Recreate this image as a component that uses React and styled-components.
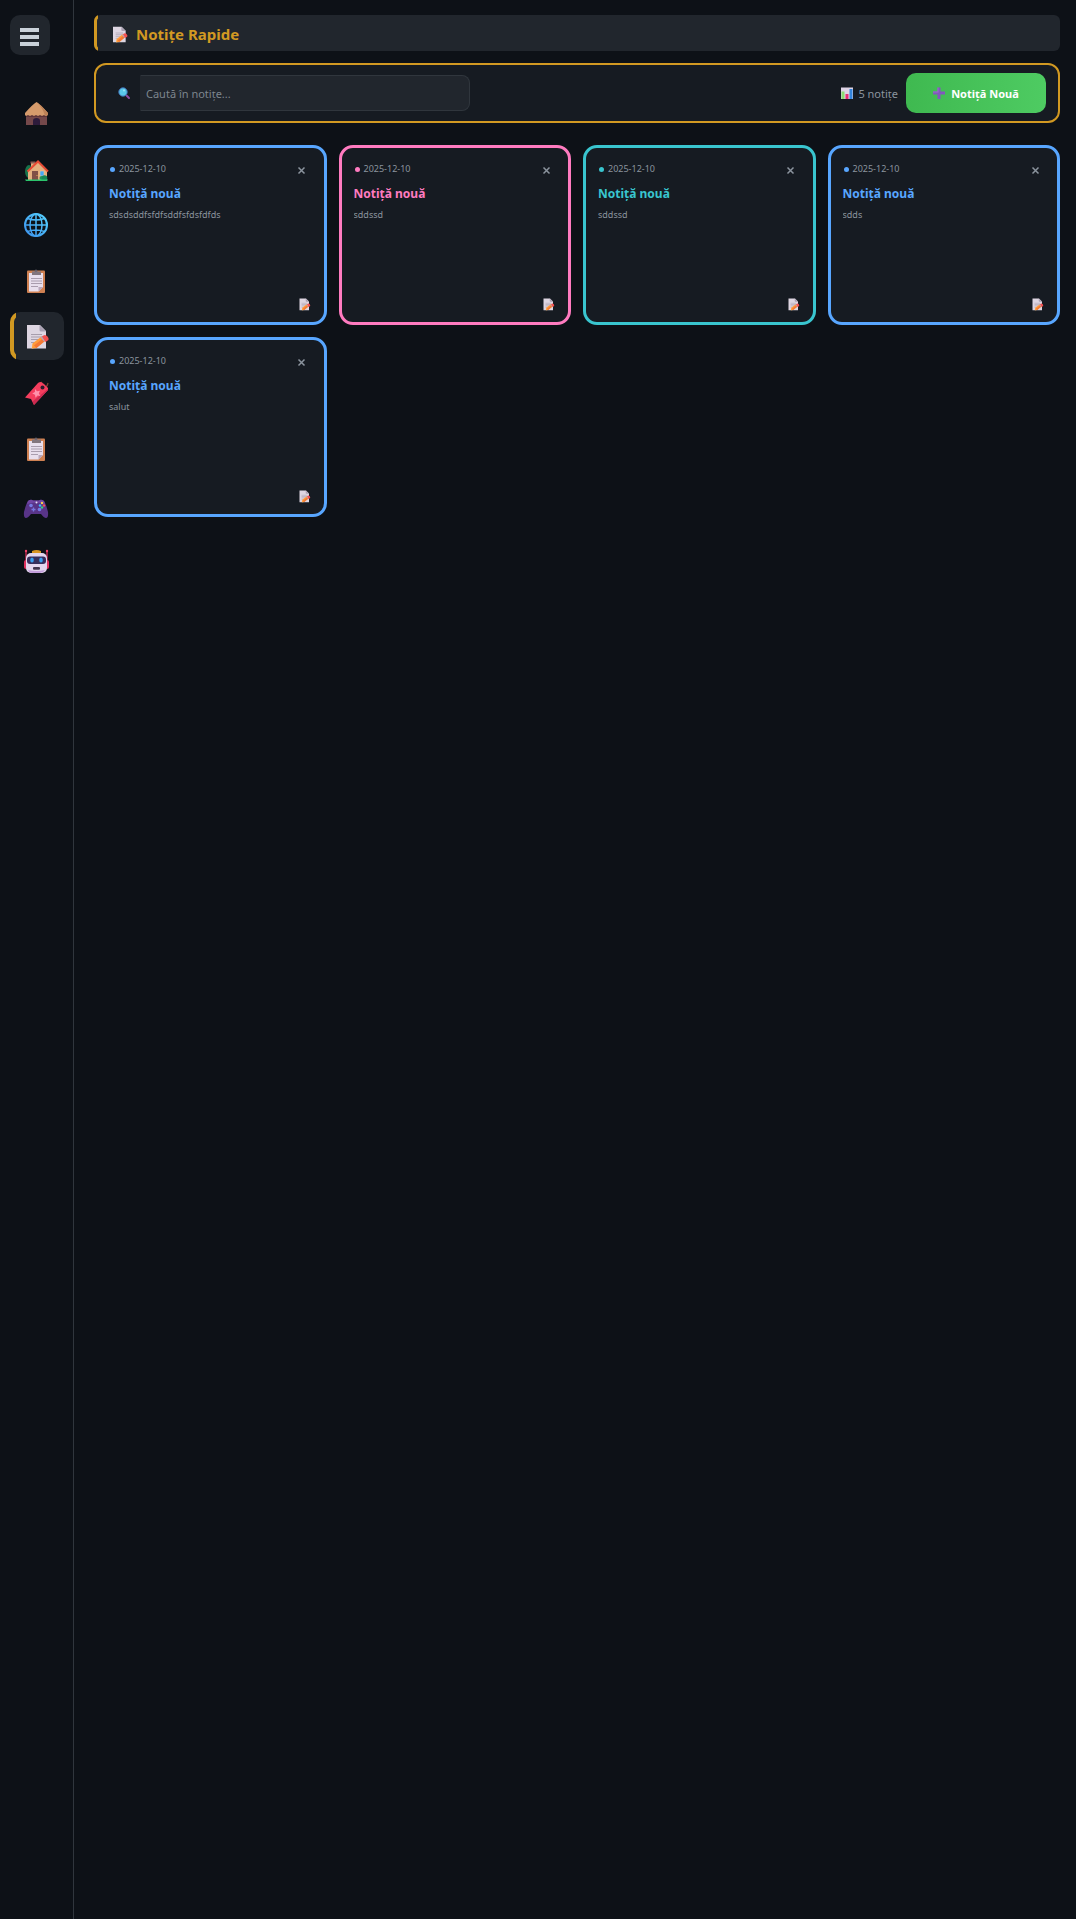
import React, { useState } from 'react';
import styled, { createGlobalStyle } from 'styled-components';

const GlobalStyle = createGlobalStyle`
  * {
    box-sizing: border-box;
  }

  body {
    margin: 0;
    background: #0d1117;
    color: #c9d1d9;
    font-family: 'Segoe UI', 'Noto Sans', sans-serif;
  }

  button, input {
    font-family: inherit;
  }
`;

const Layout = styled.div`
  display: flex;
  min-height: 100vh;
`;

const Sidebar = styled.aside`
  flex: none;
  display: flex;
  flex-direction: column;
  width: 74px;
  padding: 15px 9px 15px 10px;
  border-right: 1px solid #30363d;
`;

const MenuButton = styled.button`
  display: flex;
  align-items: center;
  justify-content: center;
  width: 40px;
  height: 40px;
  padding: 3px 2px 0 0;
  border: none;
  border-radius: 10px;
  background: #21262d;
  cursor: pointer;
`;

const Nav = styled.nav`
  display: flex;
  flex-direction: column;
  gap: 8px;
  margin-top: 33px;
`;

const NavLink = styled.a`
  position: relative;
  display: flex;
  align-items: center;
  justify-content: center;
  height: 48px;
  padding-right: 2px;
  border-radius: 10px;
  background: ${({ $active }) => ($active ? '#21262d' : 'transparent')};

  &::before {
    content: '';
    display: ${({ $active }) => ($active ? 'block' : 'none')};
    position: absolute;
    inset: 0;
    border: 4px solid #d29922;
    border-radius: 10px;
    clip-path: inset(0 calc(100% - 6px) 0 0);
  }
`;

const Main = styled.main`
  flex: 1;
  min-width: 0;
  padding: 15px 16px 15px 20px;
`;

const Header = styled.header`
  position: relative;
  display: flex;
  align-items: center;
  gap: 9px;
  height: 36px;
  padding: 2px 17px 0;
  border-radius: 6px;
  background: #21262d;

  &::before {
    content: '';
    position: absolute;
    inset: 0;
    border: 3px solid #d29922;
    border-radius: 6px;
    clip-path: inset(0 calc(100% - 4px) 0 0);
  }
`;

const PageTitle = styled.h1`
  margin: 0;
  color: #d29922;
  font-size: 15px;
  line-height: 20px;
`;

const Toolbar = styled.section`
  display: flex;
  align-items: center;
  gap: 8px;
  height: 60px;
  margin-top: 12px;
  padding: 0 12px;
  border: 2px solid #d29922;
  border-radius: 12px;
  background: #161b22;
`;

const SearchLabel = styled.label`
  display: flex;
  align-items: center;
  gap: 10px;
  padding-left: 10px;
`;

const SearchInput = styled.input`
  width: 330px;
  height: 36px;
  padding: 0 5px;
  border: 1px solid #30363d;
  border-left-color: #21262d;
  border-radius: 0 8px 8px 0;
  background: #21262d;
  color: #c9d1d9;
  font-size: 11px;
  outline: none;

  &::placeholder {
    color: #7d858e;
    opacity: 1;
  }
`;

const Stats = styled.span`
  display: flex;
  align-items: center;
  gap: 5px;
  margin-left: auto;
  color: #8b949e;
  font-size: 11px;
  white-space: nowrap;
`;

const AddButton = styled.button`
  display: flex;
  align-items: center;
  justify-content: center;
  gap: 6px;
  width: 140px;
  height: 40px;
  border: none;
  border-radius: 10px;
  background: linear-gradient(90deg, #3fb950, #4ecb62);
  color: #ffffff;
  font-size: 11px;
  font-weight: 700;
  cursor: pointer;
`;

const NotesGrid = styled.section`
  display: grid;
  grid-template-columns: repeat(auto-fill, minmax(200px, 1fr));
  gap: 12px;
  margin-top: 22px;
`;

const Card = styled.article`
  display: flex;
  flex-direction: column;
  height: 180px;
  padding: 10px 12px 12px;
  border: 3px solid ${({ $color }) => $color};
  border-radius: 14px;
  background: #161b22;
`;

const CardTop = styled.div`
  display: flex;
  align-items: center;
  gap: 4px;
  height: 22px;
`;

const Dot = styled.span`
  width: 5px;
  height: 5px;
  margin-left: 1px;
  border-radius: 50%;
  background: ${({ $color }) => $color};
`;

const CardDate = styled.time`
  color: #8b949e;
  font-size: 9px;
  line-height: 12px;
`;

const CloseButton = styled.button`
  display: flex;
  align-items: center;
  justify-content: center;
  width: 20px;
  height: 20px;
  margin-left: auto;
  padding: 3px 0 0;
  border: none;
  background: transparent;
  cursor: pointer;
`;

const CardTitle = styled.h2`
  margin: 5px 0 0;
  color: ${({ $color }) => $color};
  font-size: 12px;
  line-height: 18px;
`;

const CardText = styled.p`
  flex: 1;
  margin: 6px 0 0;
  color: #8b949e;
  font-size: 9px;
  line-height: 12px;
  overflow: hidden;
`;

const CardFooter = styled.div`
  display: flex;
  justify-content: flex-end;
  padding-right: 2px;
`;

const Svg = styled.svg`
  display: block;
  flex: none;
  overflow: visible;
`;

const Icon = ({ size = 24, children }) => (
  <Svg width={size} height={size} viewBox="0 0 24 24" aria-hidden="true">
    {children}
  </Svg>
);

const MenuIcon = () => (
  <Svg width="19" height="19" viewBox="0 0 19 19" aria-hidden="true">
    <path d="M0 1h19v4H0zM0 8h19v4H0zM0 15h19v4H0z" fill="#c9d1d9" />
  </Svg>
);

const HutIcon = () => (
  <Icon>
    <path d="M2 14h21v11H2z" fill="#74484a" />
    <path d="M2 14h21v3H2z" fill="#5d3438" />
    <path d="M9 25v-4.500q0-2.500 3.500-2.500t3.500 2.500V25z" fill="#2d1b3b" />
    <path d="M12.500 2Q16 4 24 13v2l-2 1-2-1-2 1-2-1-2 1-2-1-2 1-2-1-2 1-2-1-2 1-1-1v-2Q9 4 12.500 2z" fill="#d59b6c" />
    <path d="M12.500 2Q16 4 24 13v2l-3 1Q19 8 12.500 2z" fill="#bd8257" />
  </Icon>
);

const HouseIcon = () => (
  <Icon>
    <ellipse cx="5" cy="15.500" rx="4" ry="6.500" fill="#17724b" />
    <path d="M7 6h4v7H7z" fill="#e1ae7d" />
    <path d="M6.500 5.500h5v2h-5z" fill="#8b5b53" />
    <path d="M4 15 14 6l9 9v9H4z" fill="#e4b07f" />
    <path d="m3.500 15.500 10.500-10 10 10" fill="none" stroke="#e84b35" strokeWidth="2" />
    <path d="M8 15h6v9H8z" fill="#815047" />
    <circle cx="13" cy="19.500" r=".6" fill="#f2b64b" />
    <path d="M16 15h4v5h-4z" fill="#45a8f5" stroke="#f1c89a" strokeWidth=".6" />
    <circle cx="17.500" cy="22" r="2" fill="#20945c" />
    <circle cx="20.500" cy="22" r="2.800" fill="#168555" />
    <path d="M1 23.500h23l-1 1.500H2z" fill="#2bc46c" />
  </Icon>
);

const GlobeIcon = () => (
  <Icon>
    <defs>
      <linearGradient id="globe" gradientUnits="userSpaceOnUse" x1="1" y1="24" x2="23" y2="2">
        <stop offset="0" stopColor="#3c91ec" />
        <stop offset="1" stopColor="#55d2ff" />
      </linearGradient>
    </defs>
    <g fill="none" stroke="url(#globe)" strokeWidth="1.500">
      <circle cx="12" cy="13" r="11" strokeWidth="2" />
      <ellipse cx="12" cy="13" rx="6" ry="11" />
      <path d="M3.500 6.500Q12 9.500 20.500 6.500M1 13h22M3.500 19.500Q12 16.500 20.500 19.500M12 2v22" />
    </g>
  </Icon>
);

const ClipboardIcon = () => (
  <Icon>
    <rect x="3" y="2.500" width="18" height="22.500" rx="1" fill="#cf8152" />
    <path d="M5 5h14v14l-4.500 4.500H5z" fill="#e8dfed" />
    <path d="M14.500 23.500V19H19z" fill="#b9a8bc" />
    <circle cx="12" cy="3" r="1.500" fill="#655d68" />
    <path d="M8 3.500h9V7H8z" fill="#82767e" />
    <path d="M7 10.500h11M7 13h11M7 15.500h11M7 18.500h7" stroke="#a99dae" strokeWidth="1" />
  </Icon>
);

const NoteIcon = ({ size }) => (
  <Icon size={size}>
    <path d="M3 1h13l6 6v17.500H3z" fill="#ded6e2" />
    <path d="M15.500 1 22 7.500h-5q-1.500 0-1.500-1.500z" fill="#aaa1b3" />
    <path d="M7 10.500h11M7 13h11M7 15.500h8M7 18.500h4" stroke="#a79dac" strokeWidth="1" />
    <path d="m7.500 24.500 1-5 4 4z" fill="#ffd391" />
    <path d="m8.500 19.500 9-7 4 4-9 7.500-4.500.5z" fill="#ff9c3c" />
    <path d="m10 21.500 9.500-7.500 2 2.500-9 7.500z" fill="#f47835" />
    <path d="m16.500 13.500 2-1.500 3.500 4-2 1.500z" fill="#b6a8bb" />
    <path d="M18 12.500q3-3 5.500 0t-.5 4.500l-1.500 1z" fill="#f45151" />
  </Icon>
);

const BookmarkIcon = () => (
  <Icon>
    <path d="M19 7q-3-3-1-5M19 7q4 1 5-4" fill="none" stroke="#744434" strokeWidth="1.300" />
    <path d="M14 3q1-1 3-1l3 2 4 4v2L10 25l-3-6-6-1.500z" fill="#f43e5e" />
    <path d="m24 9v1L10 25l-1.500-3.500z" fill="#cc2a50" />
    <circle cx="18.500" cy="7.500" r="2" fill="#281c2b" />
    <path d="m11 9 2 2.300 3-.5-1.200 2.700 1.700 2.500-3-.5-2 2.200-.5-3-2.800-1.200 2.700-1.500z" fill="#ff91ab" />
  </Icon>
);

const GamepadIcon = () => (
  <Icon>
    <g transform="translate(0 1)">
      <path d="M4 8q3-2 5-.5h6q2-1.500 5 .5 2 3 4 11 .6 6-2 6-2 0-5-4H7q-3 4-5 4-2.600 0-2-6Q2 11 4 8z" fill="#583488" />
      <path d="M4 8q3-2 5-.5h6q2-1.500 5 .5l1 3q-9-3-18 0z" fill="#7045a4" />
      <circle cx="7" cy="12.500" r="1.800" fill="#777ae5" />
      <circle cx="15.500" cy="16.500" r="1.800" fill="#777ae5" />
      <path d="M9.500 14.500v4M7.500 16.500h4" stroke="#7776df" strokeWidth="1.300" />
      <circle cx="12.500" cy="9.500" r="1" fill="#e4dff2" />
      <circle cx="18" cy="10" r="1.200" fill="#f6cf4b" />
      <circle cx="16" cy="12.500" r="1.200" fill="#3eb7ff" />
      <circle cx="20" cy="12.500" r="1.200" fill="#f1505c" />
      <circle cx="18" cy="14.500" r="1.200" fill="#38cc84" />
    </g>
  </Icon>
);

const RobotIcon = () => (
  <Icon>
    <path d="M2 3v13M23 3v13" stroke="#bb264e" strokeWidth="1.500" />
    <circle cx="2" cy="3" r="1.200" fill="#f34168" />
    <circle cx="23" cy="3" r="1.200" fill="#f34168" />
    <path d="M0 14q0-2 2-2h21q2 0 2 2v5q0 2-2 2H2q-2 0-2-2z" fill="#df315f" />
    <path d="M8 3q4.500-2 9 0v3H8z" fill="#d99522" />
    <rect x="2" y="5" width="21" height="20" rx="5" fill="#e4d6ee" />
    <path d="M4 22q8.500 2 17 0-2 3-5 3H8q-3 0-4-3z" fill="#c39edb" />
    <rect x="3" y="8.500" width="19" height="7.500" rx="3" fill="#372e5c" />
    <ellipse cx="8" cy="12" rx="1.800" ry="2.500" fill="#399eef" />
    <ellipse cx="17" cy="12" rx="1.800" ry="2.500" fill="#399eef" />
    <rect x="9" y="19" width="7" height="2.800" rx="1" fill="#42344e" />
  </Icon>
);

const SearchIcon = () => (
  <Icon size={12}>
    <path d="m15 15 7 7" stroke="#8f4ca1" strokeWidth="4" strokeLinecap="round" />
    <circle cx="10" cy="10" r="8.500" fill="#5ac8eb" stroke="#3b65a6" strokeWidth="2" />
    <circle cx="12" cy="7" r="2" fill="#9de5f7" />
  </Icon>
);

const ChartIcon = () => (
  <Icon size={12}>
    <path d="M0 1h24v23H0z" fill="#ded4e6" />
    <path d="M1 9h6v15H1z" fill="#8bdc72" />
    <path d="M9 14h6v10H9z" fill="#e62c75" />
    <path d="M17 4h6v20h-6z" fill="#3385dd" />
  </Icon>
);

const PlusIcon = () => (
  <Icon size={12}>
    <path d="M9 1h6v8h9v6h-9v9H9v-9H0V9h9z" fill="#8257bd" />
    <path d="M9 1h2v10H0V9h9z" fill="#9c6bd0" />
  </Icon>
);

const CloseIcon = () => (
  <Svg width="7" height="7" viewBox="0 0 7 7" aria-hidden="true">
    <path d="m.5.5 6 6m0-6-6 6" stroke="#8b949e" strokeWidth="1.500" />
  </Svg>
);

const navItems = [
  { id: 'cabana', label: 'Cabană', icon: HutIcon },
  { id: 'acasa', label: 'Acasă', icon: HouseIcon },
  { id: 'web', label: 'Web', icon: GlobeIcon },
  { id: 'sarcini', label: 'Sarcini', icon: ClipboardIcon },
  { id: 'notite', label: 'Notițe', icon: NoteIcon },
  { id: 'semne', label: 'Semne de carte', icon: BookmarkIcon },
  { id: 'liste', label: 'Liste', icon: ClipboardIcon },
  { id: 'jocuri', label: 'Jocuri', icon: GamepadIcon },
  { id: 'asistent', label: 'Asistent', icon: RobotIcon },
];

const BLUE = '#58a6ff';
const PINK = '#ff7bc0';
const TEAL = '#39c5cf';

const initialNotes = [
  { id: 1, color: BLUE, text: 'sdsdsddfsfdfsddfsfdsfdfds' },
  { id: 2, color: PINK, text: 'sddssd' },
  { id: 3, color: TEAL, text: 'sddssd' },
  { id: 4, color: BLUE, text: 'sdds' },
  { id: 5, color: BLUE, text: 'salut' },
].map((note) => ({ ...note, title: 'Notiță nouă', date: '2025-12-10' }));

const NoteCard = ({ note, onRemove }) => (
  <Card $color={note.color}>
    <CardTop>
      <Dot $color={note.color} />
      <CardDate dateTime={note.date}>{note.date}</CardDate>
      <CloseButton type="button" aria-label="Șterge notița" onClick={() => onRemove(note.id)}>
        <CloseIcon />
      </CloseButton>
    </CardTop>
    <CardTitle $color={note.color}>{note.title}</CardTitle>
    <CardText>{note.text}</CardText>
    <CardFooter>
      <NoteIcon size={12} />
    </CardFooter>
  </Card>
);

const App = () => {
  const [notes, setNotes] = useState(initialNotes);
  const [query, setQuery] = useState('');

  const visible = notes.filter((note) =>
    `${note.title} ${note.text}`.toLowerCase().includes(query.toLowerCase())
  );

  const removeNote = (id) => setNotes(notes.filter((note) => note.id !== id));

  const addNote = () => {
    const date = new Date().toISOString().slice(0, 10);
    setNotes([{ id: Date.now(), color: BLUE, title: 'Notiță nouă', text: '', date }, ...notes]);
  };

  return (
    <>
      <GlobalStyle />
      <Layout>
        <Sidebar>
          <MenuButton type="button" aria-label="Meniu">
            <MenuIcon />
          </MenuButton>
          <Nav>
            {navItems.map(({ id, label, icon: NavIcon }) => (
              <NavLink key={id} href={`#${id}`} aria-label={label} $active={id === 'notite'}>
                <NavIcon />
              </NavLink>
            ))}
          </Nav>
        </Sidebar>
        <Main>
          <Header>
            <NoteIcon size={16} />
            <PageTitle>Notițe Rapide</PageTitle>
          </Header>
          <Toolbar>
            <SearchLabel htmlFor="search" aria-label="Caută">
              <SearchIcon />
              <SearchInput
                id="search"
                type="text"
                placeholder="Caută în notițe..."
                value={query}
                onChange={(e) => setQuery(e.target.value)}
              />
            </SearchLabel>
            <Stats>
              <ChartIcon />
              {notes.length} notițe
            </Stats>
            <AddButton type="button" onClick={addNote}>
              <PlusIcon />
              Notiță Nouă
            </AddButton>
          </Toolbar>
          <NotesGrid>
            {visible.map((note) => (
              <NoteCard key={note.id} note={note} onRemove={removeNote} />
            ))}
          </NotesGrid>
        </Main>
      </Layout>
    </>
  );
};

export default App;
